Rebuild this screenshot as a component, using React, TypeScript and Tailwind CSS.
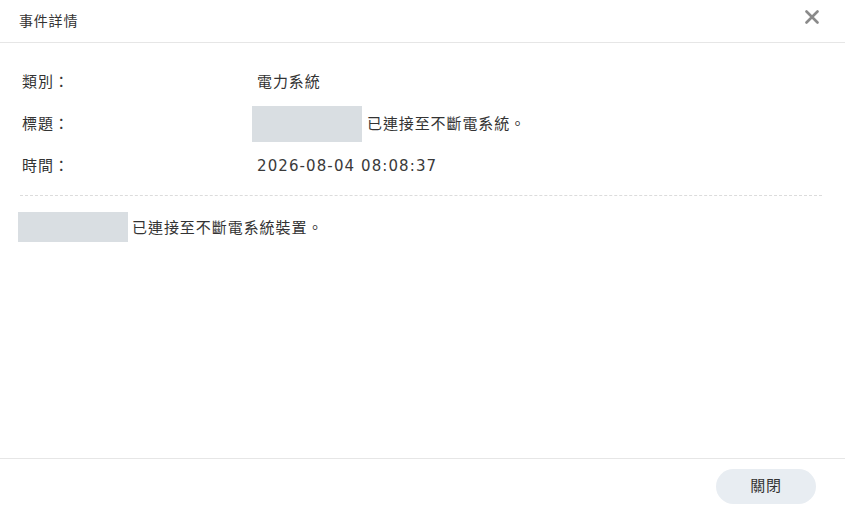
export default function App() {
  const rows = [
    { label: "類別：", value: <span>電力系統</span> },
    {
      label: "標題：",
      value: (
        <span className="flex items-center">
          <span className="ml-[-5px] inline-block h-[36px] w-[110px] bg-[#d9dee2]" />
          <span className="ml-[5px]">已連接至不斷電系統。</span>
        </span>
      ),
    },
    { label: "時間：", value: <span className="tracking-[1.1px] text-[#3a3a3a]">2026-08-04 08:08:37</span> },
  ];

  return (
    <div
      className="flex h-[513px] w-[845px] flex-col bg-white text-[#333]"
      style={{ fontFamily: '"DejaVu Sans", "Noto Sans CJK TC", sans-serif' }}
    >
      <div className="flex h-[43px] items-center justify-between border-b border-[#e6e6e6] pl-[19px] pr-[26px]">
        <span className="text-[14px] tracking-[0.8px] text-[#333]">事件詳情</span>
        <svg width="14" height="14" viewBox="0 0 14 14" className="mt-[-8px]">
          <path d="M1.5 1.5 L12.5 12.5 M12.5 1.5 L1.5 12.5" stroke="#8a8a8a" strokeWidth="2.6" strokeLinecap="round" />
        </svg>
      </div>

      <div className="flex-1 pl-[20px] pr-[23px] pt-[18px]">
        <div className="flex flex-col">
          {rows.map((r) => (
            <div key={r.label} className="flex h-[42px] items-center text-[15px] tracking-[0.9px]">
              <span className="w-[237px] pl-[2px]">{r.label}</span>
              {r.value}
            </div>
          ))}
        </div>
        <div className="mt-[8px] border-t border-dashed border-[#dcdcdc]" />
        <div className="mt-[16px] flex items-center text-[15px] tracking-[0.95px]">
          <span className="ml-[-2px] inline-block h-[30px] w-[110px] bg-[#d9dee2]" />
          <span className="ml-[4px] mt-[2px]">已連接至不斷電系統裝置。</span>
        </div>
      </div>

      <div className="flex h-[55px] items-center justify-end border-t border-[#e6e6e6] pr-[29px]">
        <button className="h-[35px] w-[100px] rounded-full bg-[#e8edf2] text-[15px] tracking-[0.8px] text-[#333]">
          關閉
        </button>
      </div>
    </div>
  );
}
